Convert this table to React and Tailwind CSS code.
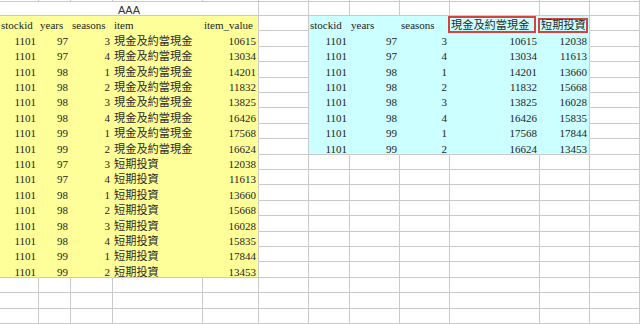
import React from "react";

// column widths incl. the 1px gridline on the right
const COLS = ["w-[39px]", "w-[32px]", "w-[42px]", "w-[90px]", "w-[56px]", "w-[50px]", "w-[41px]", "w-[50px]", "w-[50px]", "w-[90px]", "w-[50px]", "flex-1"];

const HEIGHTS = { 1: "h-[1px]", 2: "h-[2px]", 14: "h-[14px]", 15: "h-[15px]", 16: "h-[16px]" };

const CASH = "現金及約當現金";
const SHORT = "短期投資";

const leftData = [
  [97, 3, CASH, 10615],
  [97, 4, CASH, 13034],
  [98, 1, CASH, 14201],
  [98, 2, CASH, 11832],
  [98, 3, CASH, 13825],
  [98, 4, CASH, 16426],
  [99, 1, CASH, 17568],
  [99, 2, CASH, 16624],
  [97, 3, SHORT, 12038],
  [97, 4, SHORT, 11613],
  [98, 1, SHORT, 13660],
  [98, 2, SHORT, 15668],
  [98, 3, SHORT, 16028],
  [98, 4, SHORT, 15835],
  [99, 1, SHORT, 17844],
  [99, 2, SHORT, 13453],
];

const rightData = [
  [97, 3, 10615, 12038],
  [97, 4, 13034, 11613],
  [98, 1, 14201, 13660],
  [98, 2, 11832, 15668],
  [98, 3, 13825, 16028],
  [98, 4, 16426, 15835],
  [99, 1, 17568, 17844],
  [99, 2, 16624, 13453],
];

const dataHeights = [16, 15, 16, 15, 15, 16, 15, 16, 15, 15, 16, 15, 16, 15, 15, 16];

const Cell = ({ col, text, right, fill, edgeR, edgeB, cjk, children }) => {
  let border = "border-[#c9c9c9]";
  if (fill === "y") border = "bg-[#ffff99] border-[#ffff99]";
  if (fill === "c") border = "bg-[#ccffff] border-[#ccffff]";
  return (
    <div
      className={`${COLS[col]} relative shrink-0 flex items-end border-r border-b leading-[9px] whitespace-nowrap ${border} ${
        edgeR ? "!border-r-[#c9c9c9]" : ""
      } ${edgeB ? "!border-b-[#c9c9c9]" : ""} ${right ? "justify-end pr-[2px]" : "pl-[1px]"} ${
        cjk ? "text-[11.2px] text-[#2a2a2a]" : "text-[11px]"
      }`}
    >
      {text}
      {children}
    </div>
  );
};

const emptyCells = (from) =>
  COLS.slice(from).map((_, i) => <Cell key={from + i} col={from + i} />);

const App = () => {
  const rows = [];

  // sliver of the row above
  rows.push(
    <div key="top" className={`flex ${HEIGHTS[2]}`}>
      {emptyCells(0)}
    </div>
  );

  // merged title row
  rows.push(
    <div key="title" className={`flex ${HEIGHTS[14]}`}>
      <div className="w-[259px] shrink-0 flex items-end justify-center border-r border-b border-[#c9c9c9] text-[11px] leading-[9px] text-[#333] font-['Liberation_Sans',sans-serif]">
        AAA
      </div>
      {emptyCells(5)}
    </div>
  );

  // header row
  rows.push(
    <div key="head" className={`flex ${HEIGHTS[15]}`}>
      <Cell col={0} text="stockid" fill="y" />
      <Cell col={1} text="years" fill="y" />
      <Cell col={2} text="seasons" fill="y" />
      <Cell col={3} text="item" fill="y" />
      <Cell col={4} text="item_value" fill="y" edgeR />
      <Cell col={5} />
      <Cell col={6} text="stockid" fill="c" />
      <Cell col={7} text="years" fill="c" />
      <Cell col={8} text="seasons" fill="c" />
      <Cell col={9} fill="c" cjk>
        <div className="absolute left-[-2px] top-0 w-[88px] h-[17px] border-2 border-[#d8423c] z-10 flex items-end pl-[1px] pb-[1px] leading-[9px]">
          {CASH}
        </div>
      </Cell>
      <Cell col={10} fill="c" cjk edgeR>
        <div className="absolute left-[-2px] top-[2px] w-[50px] h-[15px] border-2 border-[#d8423c] z-10 flex items-end pl-[1px] pb-[1px] leading-[9px]">
          {SHORT}
        </div>
      </Cell>
      <Cell col={11} />
    </div>
  );

  leftData.forEach((d, i) => {
    const r = rightData[i];
    const lastL = i === leftData.length - 1;
    const lastR = i === rightData.length - 1;
    rows.push(
      <div key={`d${i}`} className={`flex ${HEIGHTS[dataHeights[i]]}`}>
        <Cell col={0} text="1101" right fill="y" edgeB={lastL} />
        <Cell col={1} text={d[0]} right fill="y" edgeB={lastL} />
        <Cell col={2} text={d[1]} right fill="y" edgeB={lastL} />
        <Cell col={3} text={d[2]} fill="y" cjk edgeB={lastL} />
        <Cell col={4} text={d[3]} right fill="y" edgeR edgeB={lastL} />
        <Cell col={5} />
        {r ? (
          <>
            <Cell col={6} text="1101" right fill="c" edgeB={lastR} />
            <Cell col={7} text={r[0]} right fill="c" edgeB={lastR} />
            <Cell col={8} text={r[1]} right fill="c" edgeB={lastR} />
            <Cell col={9} text={r[2]} right fill="c" edgeB={lastR} />
            <Cell col={10} text={r[3]} right fill="c" edgeR edgeB={lastR} />
          </>
        ) : (
          emptyCells(6).slice(0, 5)
        )}
        <Cell col={11} />
      </div>
    );
  });

  [15, 16, 15, 1].forEach((h, i) => {
    rows.push(
      <div key={`e${i}`} className={`flex ${HEIGHTS[h]}`}>
        {emptyCells(0)}
      </div>
    );
  });

  return (
    <div className="w-[640px] h-[324px] overflow-hidden bg-white text-[#1e1e1e] font-['Liberation_Serif','Noto_Sans_CJK_TC',serif]">
      {rows}
    </div>
  );
};

export default App;
